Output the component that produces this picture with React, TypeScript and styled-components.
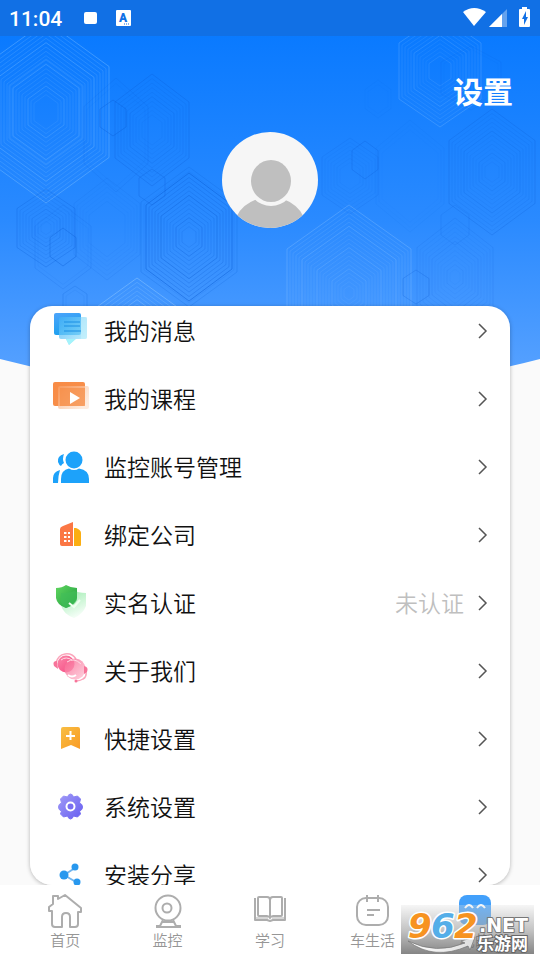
import React from 'react';
import styled, { createGlobalStyle } from 'styled-components';

const GlobalStyle = createGlobalStyle`
  * { box-sizing: border-box; }
  body {
    margin: 0;
    background: #fafafa;
    font-family: "Noto Sans CJK SC", sans-serif;
  }
  button, a { font: inherit; color: inherit; }
`;

const Page = styled.div`
  position: relative;
  display: flex;
  flex-direction: column;
  height: 100vh;
  overflow: hidden;
`;

const Backdrop = styled.svg`
  position: absolute;
  top: 0;
  left: 0;
  width: 100%;
  height: 400px;
  z-index: -1;
`;

const StatusBar = styled.div`
  display: flex;
  flex: none;
  align-items: center;
  height: 36px;
  padding: 0 8px 0 9px;
  background: #1170e5;
  color: #fff;
`;

const Clock = styled.time`
  font: 500 21px/36px Roboto, sans-serif;
  padding-top: 2px;
  margin-right: 21px;
`;

const StatusIcons = styled.svg`
  display: block;
`;

const Spacer = styled.div`
  flex: 1;
`;

const Header = styled.header`
  display: flex;
  flex: none;
  flex-direction: column;
  align-items: center;
  padding: 34px 27px 78px;
`;

const SettingsButton = styled.button`
  align-self: flex-end;
  padding: 0;
  margin-bottom: 22px;
  border: 0;
  background: none;
  color: #fff;
  font-size: 30px;
  font-weight: 700;
  line-height: 40px;
`;

const Avatar = styled.svg`
  display: block;
  width: 96px;
  height: 96px;
  border-radius: 50%;
`;

const Card = styled.main`
  flex: 1;
  min-height: 0;
  margin: 0 30px;
  overflow-y: auto;
  scrollbar-width: none;
  border-radius: 22px;
  background: #fff;
  box-shadow: 0 1px 4px rgba(0, 0, 0, 0.28);
`;

const Menu = styled.ul`
  margin: -9px 0 0;
  padding: 0;
  list-style: none;
`;

const MenuButton = styled.button`
  display: flex;
  align-items: center;
  width: 100%;
  height: 68px;
  padding: 0 22px;
  border: 0;
  background: none;
  text-align: left;
`;

const MenuIcon = styled.svg`
  flex: none;
  width: 38px;
  height: 40px;
  margin-right: 14px;
`;

const MenuLabel = styled.span`
  flex: 1;
  padding-bottom: 2px;
  color: #111;
  font-size: 23px;
  font-weight: 350;
  line-height: 32px;
`;

const MenuNote = styled.span`
  padding-bottom: 2px;
  margin-right: 14px;
  color: #bfbfbf;
  font-size: 23px;
  font-weight: 350;
  line-height: 32px;
`;

const TabBar = styled.nav`
  display: flex;
  flex: none;
  height: 75px;
  padding: 8px 14px 0;
  background: #fff;
`;

const Tab = styled.a<{ $active?: boolean }>`
  display: flex;
  flex: 1;
  flex-direction: column;
  align-items: center;
  color: ${(p) => (p.$active ? '#444' : '#969696')};
  font-size: 15px;
  font-weight: 350;
  line-height: 22px;
  text-decoration: none;

  svg {
    display: block;
    width: 36px;
    height: 36px;
  }
`;

const Watermark = styled.div`
  position: absolute;
  right: 6px;
  bottom: 6px;
  width: 133px;
  height: 49px;
  background: linear-gradient(rgba(225, 225, 225, 0.3), rgba(165, 165, 165, 0.65) 50%, rgba(120, 120, 120, 0.9));

  svg { display: block; }
`;

type HexProps = { x: number; y: number; w: number; h: number; n: number; tone: string; o: number };

const hexes: HexProps[] = [
  { x: 46, y: 112, w: 63, h: 91, n: 18, tone: '#7fc0ff', o: 0.32 },
  { x: 46, y: 112, w: 37, h: 53, n: 2, tone: '#7fc0ff', o: 0.14 },
  { x: 152, y: 130, w: 37, h: 56, n: 10, tone: '#0757cf', o: 0.19 },
  { x: 113, y: 118, w: 13, h: 18, n: 1, tone: '#0757cf', o: 0.24 },
  { x: 116, y: 135, w: 32, h: 57, n: 2, tone: '#0757cf', o: 0.1 },
  { x: 152, y: 187, w: 13, h: 18, n: 1, tone: '#0757cf', o: 0.2 },
  { x: 189, y: 237, w: 43, h: 64, n: 13, tone: '#0757cf', o: 0.34 },
  { x: 189, y: 237, w: 48, h: 70, n: 2, tone: '#0757cf', o: 0.14 },
  { x: 46, y: 228, w: 29, h: 39, n: 9, tone: '#0757cf', o: 0.2 },
  { x: 63, y: 247, w: 13, h: 19, n: 1, tone: '#0757cf', o: 0.25 },
  { x: 107, y: 229, w: 33, h: 51, n: 6, tone: '#0757cf', o: 0.08 },
  { x: 63, y: 247, w: 28, h: 42, n: 2, tone: '#0757cf', o: 0.1 },
  { x: 75, y: 302, w: 12, h: 16, n: 2, tone: '#0757cf', o: 0.15 },
  { x: 137, y: 356, w: 54, h: 78, n: 13, tone: '#a7d8ff', o: 0.3 },
  { x: 349, y: 293, w: 62, h: 88, n: 20, tone: '#9ccfff', o: 0.22 },
  { x: 455, y: 277, w: 38, h: 59, n: 12, tone: '#0757cf', o: 0.1 },
  { x: 416, y: 287, w: 13, h: 17, n: 1, tone: '#0757cf', o: 0.18 },
  { x: 455, y: 225, w: 14, h: 20, n: 1, tone: '#0757cf', o: 0.1 },
  { x: 492, y: 172, w: 43, h: 63, n: 13, tone: '#0757cf', o: 0.17 },
  { x: 440, y: 71, w: 41, h: 56, n: 11, tone: '#8dc6ff', o: 0.2 },
  { x: 471, y: 78, w: 30, h: 32, n: 2, tone: '#0757cf', o: 0.08 },
  { x: 350, y: 176, w: 28, h: 38, n: 7, tone: '#0757cf', o: 0.1 },
  { x: 365, y: 160, w: 13, h: 19, n: 1, tone: '#0757cf', o: 0.18 },
  { x: 378, y: 99, w: 13, h: 19, n: 2, tone: '#0757cf', o: 0.05 },
  { x: 410, y: 176, w: 34, h: 56, n: 3, tone: '#0757cf', o: 0.05 },
];

function Hexagons({ x, y, w, h, n, tone, o }: HexProps) {
  const rings = Array.from({ length: n }, (_, i) => {
    const k = 1 - (i * 3) / w;
    const a = w * k;
    const b = h * k;
    const points = [
      [x, y - b], [x + a, y - b / 2], [x + a, y + b / 2],
      [x, y + b], [x - a, y + b / 2], [x - a, y - b / 2],
    ].join(' ');
    return <polygon key={i} points={points} strokeOpacity={o * (i % 5 === 0 ? 1.3 : 0.75) * (1 - (i / n) * 0.45)} />;
  });
  return <g fill="none" stroke={tone} strokeWidth="1">{rings}</g>;
}

const icons: Record<string, React.ReactNode> = {
  message: (
    <>
      <defs>
        <linearGradient id="msgA" x2="0.4" y2="1"><stop stopColor="#4da4fb" /><stop offset="1" stopColor="#1aa0ee" /></linearGradient>
        <linearGradient id="msgB" x2="1" y2="1"><stop stopColor="#3fb0f6" /><stop offset="1" stopColor="#b5effc" /></linearGradient>
      </defs>
      <rect x="2" y="2" width="27" height="22" rx="2" fill="url(#msgA)" />
      <path d="M9 6h24q2 0 2 2v18q0 2-2 2H23l-6 6-3-6H9q-2 0-2-2V8q0-2 2-2z" fill="url(#msgB)" opacity=".75" />
      <path d="M12 11h16M12 15h16M12 20h17" stroke="#1f93e6" strokeWidth="1.6" opacity=".7" />
      <path d="M29 6h5q1 0 1 2v18q0 2-2 2h-4z" fill="#c8f1fc" opacity=".6" />
      <path d="M14 28h10l-7 6z" fill="#a4f3fb" />
    </>
  ),
  course: (
    <>
      <defs>
        <linearGradient id="crsA" x2="1" y2="1"><stop stopColor="#f88b45" /><stop offset="1" stopColor="#f7914e" /></linearGradient>
        <linearGradient id="crsB" x2="1" y2=".6"><stop stopColor="#f9a269" /><stop offset="1" stopColor="#fde2cf" /></linearGradient>
      </defs>
      <rect x="1" y="3" width="32" height="24" rx="2" fill="url(#crsA)" />
      <rect x="6" y="7" width="31" height="23" rx="2" fill="url(#crsB)" opacity=".65" />
      <rect x="8" y="9" width="25" height="18" fill="#f68c43" opacity=".65" />
      <path d="M18 13v12l10-6z" fill="#fff" />
    </>
  ),
  accounts: (
    <g fill="#1da2fa">
      <circle cx="22" cy="13" r="8.500" />
      <path d="M9 36V32q0-9 8-10.500 5 3 10 0 10 1.500 10 10.500V36z" />
      <path d="M12 7q-7 2-6 8 1 3 3 4 1-2 3-3-2-4 0-9z" />
      <path d="M8 23q-7 2-7 8v5h5q0-7 2-13z" />
    </g>
  ),
  company: (
    <>
      <path d="M22 13h2q5 2 5 5v12q0 1-1 1h-6z" fill="#fbae12" />
      <path d="M8 14q0-2 3-3l10-4v24H10q-2 0-2-2z" fill="#fb7745" />
      <path d="M12 18h2.500M12 22h2.500M12 26h2.500M16 18h2M16 22h2M16 26h2" stroke="#fff" strokeWidth="2" />
    </>
  ),
  verify: (
    <>
      <defs>
        <linearGradient id="verA" x2="1" y2="1"><stop stopColor="#61d65f" /><stop offset="1" stopColor="#1c9c3f" /></linearGradient>
        <linearGradient id="verB" x2=".4" y2="1"><stop stopColor="#7ee695" /><stop offset="1" stopColor="#eefdf2" /></linearGradient>
      </defs>
      <path d="M9 10q7 0 12-3 5 3 13 3v13q-3 8-12 12-11-4-13-13z" fill="url(#verB)" opacity=".8" />
      <path d="M4 5q6 0 10-3 5 3 11 3v10q-2 7-11 10Q5 22 4 15z" fill="url(#verA)" />
      <path d="M9 10q8 0 13-2l3 1v8q-3 6-11 8-4-2-5-6z" fill="#42bf59" opacity=".65" />
      <path d="M17 20l5 4 6-7" fill="none" stroke="#f0fff1" strokeWidth="2" />
    </>
  ),
  about: (
    <>
      <defs>
        <linearGradient id="abA" x2="1" y2="1"><stop stopColor="#f7628f" /><stop offset="1" stopColor="#ffc8d7" /></linearGradient>
        <linearGradient id="abB" x2="1" y2="1"><stop stopColor="#fb8aab" /><stop offset="1" stopColor="#f5447f" /></linearGradient>
      </defs>
      <path d="M4 12Q6 4 13 3q7-1 11 5M34 20q1 6-3 8-3 2-7 2" fill="none" stroke="#fba6bc" strokeWidth="1.5" />
      <circle cx="14" cy="13" r="8.500" fill="url(#abB)" />
      <circle cx="23" cy="18" r="10.500" fill="url(#abA)" opacity=".8" />
      <path d="M5 10q-5 0-3 5l4 3zM32 15q5 1 3 6l-3 2z" fill="#f7749a" />
      <path d="M9 9q5-4 11 0M15 11q7-5 14 2" stroke="#ffdce5" fill="none" />
      <path d="M16 24q4 3 8 0" stroke="#fff" strokeWidth="2" fill="none" />
      <circle cx="24" cy="30" r="1.500" fill="#f7749a" />
    </>
  ),
  quick: (
    <>
      <defs><linearGradient id="qkA" x2="1" y2="1"><stop stopColor="#f8be43" /><stop offset="1" stopColor="#f99b25" /></linearGradient></defs>
      <path d="M11 8h15q2 0 2 2v20l-9-4-10 4V10q0-2 2-2z" fill="url(#qkA)" />
      <path d="M14 17h9M18.500 12v9" stroke="#fff" strokeWidth="2" />
    </>
  ),
  system: (
    <>
      <defs><linearGradient id="syA" x2="1" y2="1"><stop stopColor="#a19bf7" /><stop offset="1" stopColor="#665df0" /></linearGradient></defs>
      <g fill="url(#syA)">
        <path d="M15.500 10q1-3 3-3t3 3l4-1 3 3-1 4q3 1 3 4t-3 4l1 3-3 3-4-1q-1 3-3 3t-3-3l-4 1-3-3 1-3q-3-1-3-4t3-4l-1-4 3-3z" stroke="url(#syA)" strokeWidth="1" strokeLinejoin="round" />
      </g>
      <circle cx="18.500" cy="19.500" r="4" fill="#796ff1" stroke="#fff" strokeWidth="2" />
    </>
  ),
  share: (
    <>
      <path d="M12 20l11-7M12 20l12 7" stroke="#73b5ee" strokeWidth="2" />
      <g fill="#2898ee"><circle cx="12" cy="20" r="4.500" /><circle cx="23" cy="12" r="3.500" /><circle cx="25" cy="27" r="3.500" /></g>
    </>
  ),
};

const rows = [
  { icon: 'message', label: '我的消息' },
  { icon: 'course', label: '我的课程' },
  { icon: 'accounts', label: '监控账号管理' },
  { icon: 'company', label: '绑定公司' },
  { icon: 'verify', label: '实名认证', note: '未认证' },
  { icon: 'about', label: '关于我们' },
  { icon: 'quick', label: '快捷设置' },
  { icon: 'system', label: '系统设置' },
  { icon: 'share', label: '安装分享' },
];

const tabs = [
  {
    label: '首页',
    art: <path d="M2 18v-4L6 11V3h5v3l7-4 16 13v4h-3v12q0 3-3 3h-5V24q0-4-4-4t-4 4v10H8q-3 0-3-3V18z" />,
  },
  {
    label: '监控',
    art: <><circle cx="18" cy="15" r="12.500" /><circle cx="17" cy="15" r="4.500" /><path d="M13 27l-3 6H6M23 27l3 6h5M6 34h25M12 29h12" /></>,
  },
  {
    label: '学习',
    art: <><path d="M7 4h8q3 0 3 3v18q-1-2-3-2H7q-1 0-1-1V5q0-1 1-1zM29 4h-8q-3 0-3 3v18q1-2 3-2h8q1 0 1-1V5q0-1-1-1z" /><path d="M3 5v22h12l3 1 3-1h12V5" /><path d="M4 25h12M20 25h12" strokeWidth="1" /></>,
  },
  {
    label: '车生活',
    art: <><rect x="3" y="5" width="31" height="27" rx="9" /><path d="M13 2v7M24 2v7M13 17h13M13 22h7" /></>,
  },
];

export default function App() {
  return (
    <Page>
      <GlobalStyle />
      <Backdrop viewBox="0 0 540 400" preserveAspectRatio="none" aria-hidden="true">
        <defs>
          <linearGradient id="sky" x2="0" y2="1">
            <stop offset="0.09" stopColor="#0a7aff" />
            <stop offset="0.55" stopColor="#2a8aff" />
            <stop offset="0.95" stopColor="#58a2ff" />
          </linearGradient>
          <clipPath id="curve"><path d="M0 0h540v359Q270 429 0 359z" /></clipPath>
        </defs>
        <g clipPath="url(#curve)">
          <rect width="540" height="400" fill="url(#sky)" />
          {hexes.map((hex, i) => <Hexagons key={i} {...hex} />)}
        </g>
      </Backdrop>

      <StatusBar>
        <Clock>11:04</Clock>
        <StatusIcons width="50" height="36" fill="#fff" aria-hidden="true">
          <rect x="1" y="12" width="13" height="12" rx="2" />
          <rect x="33" y="10" width="15" height="16" rx="1" />
          <text x="40" y="22" textAnchor="middle" fontFamily="Roboto" fontSize="12" fontWeight="900" fill="#1170e5">A</text>
          <path d="M41 24h1M43 24h1M45 24h1" stroke="#1170e5" />
        </StatusIcons>
        <Spacer />
        <StatusIcons width="70" height="36" fill="#fff" aria-hidden="true">
          <path d="M1 12q11-8 23 0L12 26z" />
          <path d="M45 9v18H27z" opacity=".35" />
          <path d="M40 14v13H27z" />
          <path d="M60 7h5v2h2q1 0 1 1v16q0 1-1 1h-9q-1 0-1-1V10q0-1 1-1h2z" />
          <path d="M64 11l-4 8h2v6l4-8h-2z" fill="#1170e5" />
        </StatusIcons>
      </StatusBar>

      <Header>
        <SettingsButton type="button">设置</SettingsButton>
        <Avatar viewBox="0 0 96 96" role="img" aria-label="头像">
          <rect width="96" height="96" fill="#f6f6f6" />
          <ellipse cx="48" cy="96" rx="36" ry="31" fill="#bfbfbf" />
          <ellipse cx="49" cy="49" rx="24" ry="25" fill="#f6f6f6" />
          <ellipse cx="49" cy="49" rx="20" ry="21" fill="#bfbfbf" />
        </Avatar>
      </Header>

      <Card>
        <Menu>
          {rows.map((row) => (
            <li key={row.icon}>
              <MenuButton type="button">
                <MenuIcon viewBox="0 0 38 40" aria-hidden="true">{icons[row.icon]}</MenuIcon>
                <MenuLabel>{row.label}</MenuLabel>
                {row.note && <MenuNote>{row.note}</MenuNote>}
                <svg width="10" height="16" fill="none" stroke="#555" strokeWidth="1.5" aria-hidden="true">
                  <path d="M1 1l7 7-7 7" />
                </svg>
              </MenuButton>
            </li>
          ))}
        </Menu>
      </Card>

      <TabBar>
        {tabs.map((tab) => (
          <Tab href="#" key={tab.label}>
            <svg viewBox="0 0 36 36" fill="none" stroke="#adadad" strokeWidth="2" strokeLinejoin="round" aria-hidden="true">{tab.art}</svg>
            <span>{tab.label}</span>
          </Tab>
        ))}
        <Tab href="#" $active>
          <svg viewBox="0 0 36 36" fill="none" aria-hidden="true">
            <rect x="2" y="2" width="32" height="30" rx="8" fill="#42a0fb" />
            <path d="M8 15q4-6 8 0M20 15q4-6 8 0" stroke="#fff" strokeWidth="2" />
          </svg>
          <span>我的</span>
        </Tab>
      </TabBar>

      <Watermark>
        <svg width="133" height="49" role="img" aria-label="962.NET 乐游网">
          <defs>
            <linearGradient id="swoosh"><stop stopColor="#fff" /><stop offset="1" stopColor="#ddd" /></linearGradient>
          </defs>
          <path d="M7 36q28 14 57 2l-4-2 14-4-5 13-2-4Q33 56 7 36z" fill="url(#swoosh)" stroke="#777" strokeWidth=".7" />
          <g fontFamily="DejaVu Sans" fontWeight="700" paintOrder="stroke" strokeLinejoin="round">
            <g fontSize="34" fontStyle="italic" stroke="#fff" strokeWidth="3">
              <text x="7" y="33" fill="#f79320">9</text>
              <text x="30" y="33" fill="#55aee8">6</text>
              <text x="53" y="33" fill="#f79320">2</text>
            </g>
            <text x="78" y="27" fontSize="19" fill="#fff" stroke="#777" strokeWidth="2">.NET</text>
          </g>
          <text x="76" y="45" fontFamily="Noto Sans CJK SC" fontSize="17" fontWeight="700" fill="#fff" stroke="#666" strokeWidth="2" paintOrder="stroke">乐游网</text>
        </svg>
      </Watermark>
    </Page>
  );
}
